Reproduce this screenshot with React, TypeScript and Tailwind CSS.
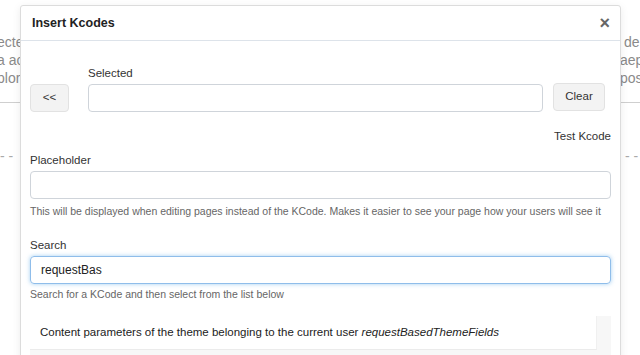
import { useState } from 'react';

const bgLines = [
  { left: 'ecte', right: '\u00a0de' },
  { left: 'a ac', right: 'aep' },
  { left: 'plor', right: 'pos' },
];

const BackgroundPage = () => {
  return (
    <div className="pt-[33px] text-[14px] leading-[18px] text-[#8a8a8a]">
      {bgLines.map((line) => (
        <div key={line.left} className="flex">
          <span className="w-[621px] shrink-0 -ml-[3px] pl-0">{line.left}</span>
          <span className="ml-[2px] whitespace-nowrap">{line.right}</span>
        </div>
      ))}
      <div className="mt-[15px] border-t border-[#cfcfcf]" />
      <div className="mt-[44px] flex text-[#aaa] leading-[18px]">
        <span className="w-[625px] shrink-0">- -</span>
        <span className="whitespace-nowrap">- -</span>
      </div>
    </div>
  );
};

const Label = ({ children }: { children: React.ReactNode }) => (
  <label className="block text-[11.5px] leading-[14px] text-[#333] mb-[4px]">{children}</label>
);

const HelpText = ({ children, className }: { children: React.ReactNode; className?: string }) => (
  <p className={`text-[10.5px] leading-[12px] text-[#666] whitespace-nowrap ${className ?? ''}`}>{children}</p>
);

const InsertKcodesDialog = () => {
  const [search, setSearch] = useState('requestBas');

  return (
    <div className="absolute left-[20px] top-[5px] w-[601px] h-[380px] bg-white border border-[#dcdcdc] rounded-t-[3px] shadow-[0_2px_8px_rgba(0,0,0,0.08)]">
      <div className="flex items-center justify-between h-[35px] px-[11px] border-b border-[#dde3ea]">
        <h2 className="text-[12.5px] font-bold text-[#222]">Insert Kcodes</h2>
        <button className="text-[18px] leading-none font-bold text-[#666] mr-[-1px]">×</button>
      </div>

      <div className="px-[9px] pt-[25px]">
        <div className="flex items-end">
          <button className="w-[39px] h-[28px] rounded-[4px] border border-[#e2e2e2] bg-[#f3f3f3] text-[11.5px] text-[#333]">
            &lt;&lt;
          </button>
          <div className="ml-[19px] w-[455px]">
            <Label>Selected</Label>
            <input className="block w-full h-[28px] rounded-[4px] border border-[#cfd4da] px-[10px] text-[12px] outline-none" />
          </div>
          <button className="ml-[10px] w-[52px] h-[28px] rounded-[4px] border border-[#e2e2e2] bg-[#f3f3f3] text-[11.5px] text-[#333] mb-[1px]">
            Clear
          </button>
        </div>

        <div className="mt-[17px] text-right text-[11.5px] leading-[14px] text-[#333]">Test Kcode</div>

        <div className="mt-[10px]">
          <Label>Placeholder</Label>
          <input className="block w-full h-[28px] rounded-[4px] border border-[#cfd4da] px-[10px] text-[12px] outline-none" />
          <HelpText className="mt-[6px]">
            This will be displayed when editing pages instead of the KCode. Makes it easier to see your page how your users will see it
          </HelpText>
        </div>

        <div className="mt-[21px]">
          <Label>Search</Label>
          <input
            value={search}
            onChange={(e) => setSearch(e.target.value)}
            className="block w-full h-[28px] rounded-[4px] border border-[#8fbdea] px-[10px] text-[12px] text-[#222] outline-none shadow-[0_0_4px_rgba(102,175,233,0.6)]"
          />
          <HelpText className="mt-[4px]">Search for a KCode and then select from the list below</HelpText>
        </div>

        <div className="mt-[16px] flex bg-[#f7f7f7] h-[60px]">
          <div className="w-[567px] self-start h-[34px] flex items-center pl-[10px] bg-white border-b border-[#ebebeb] border-r border-r-[#f0f0f0] text-[11.5px] text-[#222]">
            <span>
              Content parameters of the theme belonging to the current user <i>requestBasedThemeFields</i>
            </span>
          </div>
        </div>
      </div>
    </div>
  );
};

export default function App() {
  return (
    <div className="relative w-[640px] h-[355px] overflow-hidden bg-white font-['Liberation_Sans',Arial,sans-serif]">
      <BackgroundPage />
      <InsertKcodesDialog />
    </div>
  );
}
